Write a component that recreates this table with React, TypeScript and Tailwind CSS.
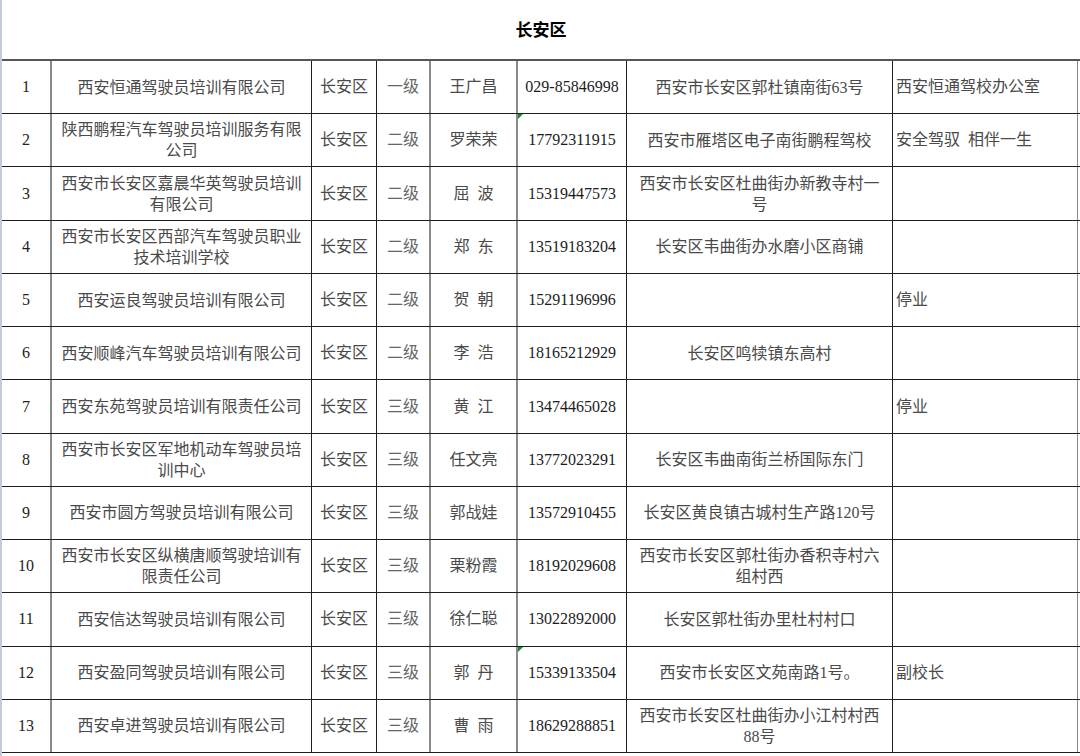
import React from "react";

type Row = {
  n: string;
  name: string[];
  area: string;
  level: string;
  person: string;
  phone: string;
  addr: string[];
  note: string;
  flag?: boolean;
};

const rows: Row[] = [
  { n: "1", name: ["西安恒通驾驶员培训有限公司"], area: "长安区", level: "一级", person: "王广昌", phone: "029-85846998", addr: ["西安市长安区郭杜镇南街63号"], note: "西安恒通驾校办公室" },
  { n: "2", name: ["陕西鹏程汽车驾驶员培训服务有限", "公司"], area: "长安区", level: "二级", person: "罗荣荣", phone: "17792311915", addr: ["西安市雁塔区电子南街鹏程驾校"], note: "安全驾驭  相伴一生", flag: true },
  { n: "3", name: ["西安市长安区嘉晨华英驾驶员培训", "有限公司"], area: "长安区", level: "二级", person: "屈\u2002波", phone: "15319447573", addr: ["西安市长安区杜曲街办新教寺村一", "号"], note: "" },
  { n: "4", name: ["西安市长安区西部汽车驾驶员职业", "技术培训学校"], area: "长安区", level: "二级", person: "郑\u2002东", phone: "13519183204", addr: ["长安区韦曲街办水磨小区商铺"], note: "" },
  { n: "5", name: ["西安运良驾驶员培训有限公司"], area: "长安区", level: "二级", person: "贺\u2002朝", phone: "15291196996", addr: [""], note: "停业" },
  { n: "6", name: ["西安顺峰汽车驾驶员培训有限公司"], area: "长安区", level: "二级", person: "李\u2002浩", phone: "18165212929", addr: ["长安区鸣犊镇东高村"], note: "" },
  { n: "7", name: ["西安东苑驾驶员培训有限责任公司"], area: "长安区", level: "三级", person: "黄\u2002江", phone: "13474465028", addr: [""], note: "停业" },
  { n: "8", name: ["西安市长安区军地机动车驾驶员培", "训中心"], area: "长安区", level: "三级", person: "任文亮", phone: "13772023291", addr: ["长安区韦曲南街兰桥国际东门"], note: "" },
  { n: "9", name: ["西安市圆方驾驶员培训有限公司"], area: "长安区", level: "三级", person: "郭战娃", phone: "13572910455", addr: ["长安区黄良镇古城村生产路120号"], note: "" },
  { n: "10", name: ["西安市长安区纵横唐顺驾驶培训有", "限责任公司"], area: "长安区", level: "三级", person: "栗粉霞", phone: "18192029608", addr: ["西安市长安区郭杜街办香积寺村六", "组村西"], note: "" },
  { n: "11", name: ["西安信达驾驶员培训有限公司"], area: "长安区", level: "三级", person: "徐仁聪", phone: "13022892000", addr: ["长安区郭杜街办里杜村村口"], note: "" },
  { n: "12", name: ["西安盈同驾驶员培训有限公司"], area: "长安区", level: "三级", person: "郭\u2002丹", phone: "15339133504", addr: ["西安市长安区文苑南路1号。"], note: "副校长", flag: true },
  { n: "13", name: ["西安卓进驾驶员培训有限公司"], area: "长安区", level: "三级", person: "曹\u2002雨", phone: "18629288851", addr: ["西安市长安区杜曲街办小江村村西", "88号"], note: "" },
];

const font = { fontFamily: '"Liberation Serif", "Noto Sans CJK SC", serif' };

function Lines({ lines }: { lines: string[] }) {
  return (
    <div className="flex flex-col items-center leading-[21px]">
      {lines.map((l, i) => (
        <span key={i} className="whitespace-pre">{l}</span>
      ))}
    </div>
  );
}

export default function App() {
  return (
    <div
      className="w-[1080px] h-[756px] bg-white border-l-2 border-[#c3cad9] flex flex-col overflow-hidden"
      style={font}
    >
      <div className="h-[59px] w-[1078px] flex items-center justify-center text-[17px] font-bold text-black pt-[2px]">
        长安区
      </div>
      <div className="w-[1078px] h-[694px] flex flex-col border-t-2 border-[#555]">
        {rows.map((r, i) => (
          <div
            key={i}
            className={`flex-1 grid grid-cols-[50px_260px_65px_54px_87px_109px_266px_185px] border-b border-[#1f1f1f] text-[16px] text-[#4a4a4a]`}
          >
            <div className="flex items-center justify-center border-r-2 border-[#8a8a8a] text-[#222]">{r.n}</div>
            <div className="flex items-center justify-center border-r border-[#1f1f1f]">
              <Lines lines={r.name} />
            </div>
            <div className="flex items-center justify-center border-r border-[#1f1f1f]">{r.area}</div>
            <div className="flex items-center justify-center border-r-2 border-[#8a8a8a] text-[#666]">{r.level}</div>
            <div className="flex items-center justify-center border-r-2 border-[#8a8a8a]">
              <span className="whitespace-pre">{r.person}</span>
            </div>
            <div className="relative flex items-center justify-center border-r border-[#1f1f1f] text-[#1c1c1c]">
              {r.flag && (
                <span className="absolute left-0 top-0 w-0 h-0 border-t-[5px] border-r-[5px] border-t-[#1a8a2a] border-r-transparent" />
              )}
              {r.phone}
            </div>
            <div className="flex items-center justify-center border-r border-[#1f1f1f]">
              <Lines lines={r.addr} />
            </div>
            <div className="flex items-center justify-start pl-[3px] border-r border-[#8a8a8a]">
              <span className="whitespace-pre">{r.note}</span>
            </div>
          </div>
        ))}
      </div>
    </div>
  );
}
